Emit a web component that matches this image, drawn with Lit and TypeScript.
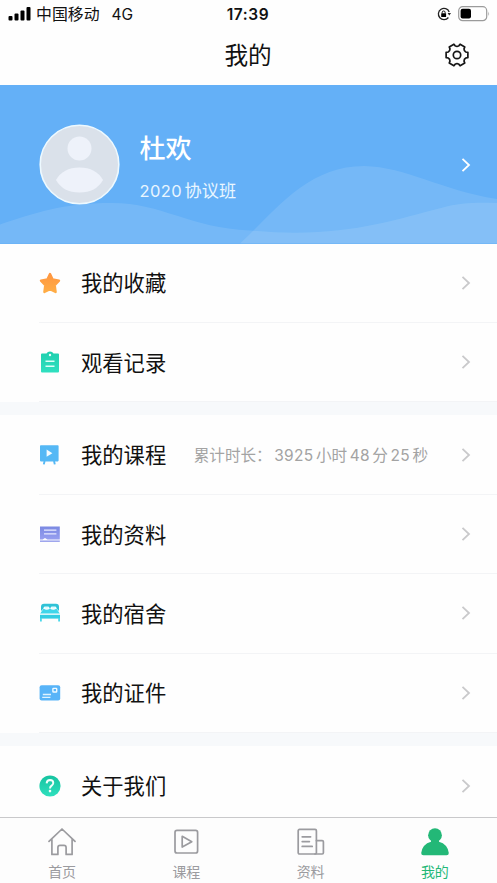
import { LitElement, html, svg, css, nothing } from "lit";
import { customElement } from "lit/decorators.js";
import { classMap } from "lit/directives/class-map.js";

const chevron = html`<svg class="chev" width="12" height="18" viewBox="0 0 12 18">
  <path d="M2.5 2.8 L9 9 L2.5 15.2" fill="none" stroke="currentColor" stroke-width="1.8" />
</svg>`;

// Outline of a six-toothed gear centred at (12, 12), one tooth pointing right.
const polar = (r: number, deg: number) => {
  const a = (deg * Math.PI) / 180;
  return `${(12 + r * Math.cos(a)).toFixed(2)} ${(12 + r * Math.sin(a)).toFixed(2)}`;
};
const gearPath =
  [0, 60, 120, 180, 240, 300]
    .map((t, i) => `${i ? "L" : "M"}${polar(11.2, t - 14)} L${polar(11.2, t + 14)} L${polar(9.3, t + 19)} Q${polar(8.1, t + 30)} ${polar(9.3, t + 41)}`)
    .join(" ") + "Z";

const icons = {
  star: svg`
    <defs><linearGradient id="gs" x1="0" y1="0" x2="0" y2="1"><stop offset="0" stop-color="#ff9640"/><stop offset="1" stop-color="#ffad45"/></linearGradient></defs>
    <path d="M11 2 L13.6 7.4 L20 8.6 L15.7 13.2 L16.6 20 L11 17.2 L5.4 20 L6.3 13.2 L2 8.6 L8.4 7.4 Z" fill="url(#gs)" stroke="url(#gs)" stroke-width="2.4" stroke-linejoin="round"/>`,
  clipboard: svg`
    <defs><linearGradient id="gc" x1="0" y1="0" x2="0" y2="1"><stop offset="0" stop-color="#1fcfae"/><stop offset="1" stop-color="#30e0c0"/></linearGradient></defs>
    <path d="M3 2.6 H7.5 Q8.5 .8 11 .6 Q13.5 .8 14.5 2.6 H19 Q20 2.6 20 3.6 V20.4 Q20 21.4 19 21.4 H3 Q2 21.4 2 20.4 V3.6 Q2 2.6 3 2.6Z" fill="url(#gc)"/>
    <circle cx="11" cy="4" r="1.2" fill="#e8fffa"/>
    <path d="M6.5 10.2 H15.500 M6.5 15.200 H15.500" stroke="#dffff8" stroke-width="1.500"/>`,
  board: svg`
    <rect x="1" y="1.200" width="18.600" height="16.200" rx=".8" fill="#55b8f5"/>
    <path d="M5.600 17 L4.800 20.400 M15 17 L15.800 20.400" stroke="#55b8f5" stroke-width="1.900"/>
    <path d="M7.600 5.600 L13.400 9.200 L7.600 12.800Z" fill="#f4fbff"/>`,
  notes: svg`
    <defs><linearGradient id="gn" x1="0" y1="0" x2="0" y2="1"><stop offset="0" stop-color="#7b89e2"/><stop offset="1" stop-color="#979ff0"/></linearGradient></defs>
    <path d="M1 3.400 H20.800 V16.400 H8.400 L6 15 L3.600 16.400 H1Z" fill="url(#gn)"/>
    <path d="M5 7.200 H17.400 M5 10.800 H17.400" stroke="#e8eaff" stroke-width="1.200"/>
    <path d="M1 18.200 H20.800" stroke="#9aa2ec" stroke-width="1.500"/>`,
  bed: svg`
    <path d="M2 9 V4.800 Q2 1.800 5 1.800 H17 Q20 1.800 20 4.800 V9 L18.200 7.200 L17 5 H12.200 L11 6.200 L9.800 5 H5 L3.800 7.200Z" fill="#2fc2d6"/>
    <path d="M4.600 6.600 Q8 9.200 11 6.200 Q14 9.200 17.400 6.600 L20.800 11.600 H1.200Z" fill="#3fd6ea"/>
    <path d="M5.200 4.600 H9.800 L9 6.400 H6Z M12.200 4.600 H16.800 L16 6.400 H13Z" fill="#dcfbff"/>
    <rect x="1" y="12.800" width="20" height="3.800" fill="#34cde2"/>
    <path d="M1.900 16 V19.600 M20.100 16 V19.600" stroke="#48d8ea" stroke-width="1.800"/>`,
  card: svg`
    <rect x=".6" y="3.200" width="20.600" height="15.400" rx="2" fill="#58b4f8"/>
    <rect x="13.900" y="6.400" width="3.800" height="3.600" rx=".6" fill="none" stroke="#effaff" stroke-width="1.400"/>
    <path d="M3.800 12.500 H12 M3.200 15.400 H11.400" stroke="#dff3ff" stroke-width="1.300"/>`,
  help: svg`
    <defs><linearGradient id="gh" x1="0" y1="0" x2="0" y2="1"><stop offset="0" stop-color="#16c3a0"/><stop offset="1" stop-color="#2fe0be"/></linearGradient></defs>
    <circle cx="11" cy="11" r="10.600" fill="url(#gh)"/>
    <path d="M7.600 8.400 Q7.800 5 11 5 Q14.300 5.100 14.300 8 Q14.200 9.500 12.600 10.600 Q11 11.700 11 13.500" fill="none" stroke="#f2fffb" stroke-width="1.900"/>
    <circle cx="11" cy="16.100" r="1.300" fill="#f2fffb"/>`,
  home: svg`<path d="M1 14.400 L14 2 L27 14.400 M3.900 12.200 V27.400 H9.900 V20.600 Q9.900 18.400 12 18.400 H16 Q18.100 18.400 18.100 20.600 V27.400 H24.100 V12.200"/>`,
  video: svg`<rect x="3" y="3.400" width="22.600" height="22.600" rx="2"/><path d="M10.200 9.300 L19.800 14.700 L10.200 20.100Z"/>`,
  docs: svg`<rect x="1.200" y="2.400" width="18.200" height="24.600" rx="1.300"/><path d="M19.400 13.600 H25.200 Q26.400 13.600 26.400 14.800 V25.800 Q26.400 27 25.200 27 H18 M5.200 9.800 H13.600 M5.200 14.600 H12.400 M5.200 19.400 H15.200"/>`,
  me: svg`<g fill="currentColor" stroke="none"><circle cx="14" cy="8.200" r="6.900"/><path d="M10 13 H18 V14.800 Q26.600 17.200 27.800 26 Q27.800 28.200 25.600 28.200 H2.400 Q.2 28.200 .2 26 Q1.400 17.200 10 14.800Z"/></g>`,
};

type IconName = keyof typeof icons;
interface Row { icon: IconName; label: string; hint?: boolean }

const groups: Row[][] = [
  [{ icon: "star", label: "我的收藏" }, { icon: "clipboard", label: "观看记录" }],
  [
    { icon: "board", label: "我的课程", hint: true },
    { icon: "notes", label: "我的资料" },
    { icon: "bed", label: "我的宿舍" },
    { icon: "card", label: "我的证件" },
  ],
  [{ icon: "help", label: "关于我们" }],
];

const tabs: { icon: IconName; label: string; active?: boolean }[] = [
  { icon: "home", label: "首页" },
  { icon: "video", label: "课程" },
  { icon: "docs", label: "资料" },
  { icon: "me", label: "我的", active: true },
];

@customElement("app-root")
export class AppRoot extends LitElement {
  static styles = css`
    :host {
      display: flex; flex-direction: column; height: 883px; overflow: hidden;
      background: #fefefe; color: #111;
      font-family: Inter, "Noto Sans CJK SC", sans-serif;
    }
    * { box-sizing: border-box; }
    svg { display: block; flex: none; }
    .status { display: grid; grid-template-columns: 1fr auto 1fr; align-items: center; height: 28px; padding: 0 7px 0 8px; flex: none; }
    .carrier { display: flex; align-items: center; font-size: 15.9px; line-height: 20px; }
    .carrier .name { margin-left: 5px; padding-top: 2px; }
    .carrier .net { margin-left: 12px; font-size: 15.5px; padding-top: 1px; }
    .time { font-size: 15.5px; font-weight: 600; letter-spacing: .6px; line-height: 20px; padding-top: 1px; margin-left: -2px; }
    .power { display: flex; justify-content: flex-end; align-items: center; gap: 7px; }
    .nav { display: grid; grid-template-columns: 1fr auto 1fr; align-items: center; height: 57px; padding: 0 28px; flex: none; }
    .title { grid-column: 2; font-size: 23.6px; line-height: 30px; margin-top: -1px; margin-left: -1px; }
    .gear { justify-self: end; margin-top: -3px; }
    .hero { position: relative; height: 158.5px; flex: none; background: #64b0f7; color: #fff; display: flex; align-items: center; padding: 0 25px 0 39px; }
    .waves { position: absolute; inset: 0; width: 100%; height: 100%; }
    .avatar { position: relative; }
    .who { position: relative; flex: 1; margin-left: 19.500px; }
    .uname { font-size: 26px; font-weight: 500; line-height: 36px; margin-top: 5px; }
    .klass { display: flex; gap: 2.5px; font-size: 17.200px; line-height: 24px; margin-top: 11.500px; color: #e9f6ff; }
    .klass .num { font-size: 16.500px; letter-spacing: .4px; }
    .hero .chev { position: relative; color: #fff; margin-top: 2px; }
    .list { flex: 1; min-height: 0; overflow: hidden; display: flex; flex-direction: column; gap: 13.2px; background: #f7f9fb; }
    .group { background: #fefefe; flex: none; }
    .group:last-child { flex: 1; }
    .row { display: flex; align-items: center; height: 79.4px; margin-left: 39px; padding-right: 25px; border-bottom: 1px solid #f3f4f6; }
    .group:last-child .row { border-bottom: 0; }
    .label { font-size: 21.3px; line-height: 30px; margin-left: 20px; padding-top: 1px; white-space: nowrap; }
    .hint { display: flex; margin-left: 27.5px; padding-top: 2px; font-size: 15.6px; line-height: 24px; color: #a3a3a3; white-space: nowrap; }
    .hint .num { margin: 0 2.5px 0 2.5px; letter-spacing: .3px; font-size: 15.5px; }
    .row .chev { margin-left: auto; color: #c9c9cb; }
    .tabs { display: grid; grid-template-columns: repeat(4, 1fr); height: 66px; flex: none; border-top: 1px solid #c9c9cb; background: #fdfdfd; }
    .tab { display: flex; flex-direction: column; align-items: center; padding-top: 9px; color: #9b9b9f; font-size: 14px; line-height: 20px; gap: 5px; }
    .tab svg { fill: none; stroke: currentColor; stroke-width: 1.7; stroke-linejoin: round; stroke-linecap: round; }
    .tab.on { color: #23b877; }
  `;

  render() {
    return html`
      <div class="status">
        <div class="carrier">
          <svg width="23" height="14" viewBox="0 0 23 14"><rect x=".5" y="9" width="4" height="4.4" rx="1"/><rect x="6.5" y="6.6" width="4" height="6.8" rx="1"/><rect x="12.5" y="3.4" width="4" height="10" rx="1"/><rect x="18.5" y="0" width="4" height="13.4" rx="1"/></svg>
          <span class="name">中国移动</span><span class="net">4G</span>
        </div>
        <div class="time">17:39</div>
        <div class="power">
          <svg width="14" height="14" viewBox="0 0 14 14"><path d="M12.2 5 A5.6 5.6 0 1 0 11.4 10.5" fill="none" stroke="#222" stroke-width="1.3"/><path d="M10.6 6 H14 L12.3 8.6Z" fill="#222"/><rect x="4.2" y="6.2" width="4.9" height="3.8" rx=".5"/><path d="M5.2 6.4 V5.3 Q5.2 4 6.65 4 Q8.1 4 8.1 5.3 V6.4" fill="none" stroke="#111"/></svg>
          <svg width="32" height="16" viewBox="0 0 32 16"><rect x=".7" y=".7" width="28" height="14" rx="4" fill="none" stroke="#9b9b9b" stroke-width="1.2"/><rect x="2.6" y="2.8" width="10.4" height="9.8" rx="2"/><path d="M30.4 5.4 Q31.8 7.7 30.4 10Z" fill="#9b9b9b"/></svg>
        </div>
      </div>
      <div class="nav">
        <div class="title">我的</div>
        <svg class="gear" width="24" height="24" viewBox="0 0 24 24" fill="none" stroke="#161616" stroke-width="1.7" stroke-linejoin="round">
          <path d=${gearPath}/><circle cx="12" cy="12" r="3.7"/>
        </svg>
      </div>
      <div class="hero">
        <svg class="waves" viewBox="0 0 497 158.5" preserveAspectRatio="none">
          <path d="M0 139.5 C35 128 62 118 112 118 C162 118 190 143 250 145.5 C340 154 390 136 441 123 C462 117 478 117.5 497 118 V158.5 H0Z" fill="#fff" fill-opacity=".11"/>
          <path d="M240 158.5 C272 130 305 81 364 81 C407 82 440 105 497 114 V158.5Z" fill="#fff" fill-opacity=".11"/>
        </svg>
        <svg class="avatar" width="81" height="81" viewBox="0 0 81 81">
          <circle cx="40.5" cy="40.5" r="39.3" fill="#dae1ea" stroke="#edf9ff" stroke-width="1.6"/>
          <circle cx="40.5" cy="24.5" r="12" fill="#eef2fa"/>
          <path d="M17 56 Q24 43.5 40.5 43.5 Q57 43.5 64 56 Q57 68.5 40.5 68.5 Q24 68.5 17 56Z" fill="#eef2fa"/>
        </svg>
        <div class="who">
          <div class="uname">杜欢</div>
          <div class="klass"><span class="num">2020</span><span>协议班</span></div>
        </div>
        ${chevron}
      </div>
      <div class="list">
        ${groups.map((g) => html`<div class="group">${g.map((r) => html`
          <div class="row">
            <svg width="22" height="22" viewBox="0 0 22 22">${icons[r.icon]}</svg>
            <span class="label">${r.label}</span>
            ${r.hint ? html`<span class="hint"><span>累计时长：</span><span class="num">3925</span><span>小时</span><span class="num">48</span><span>分</span><span class="num">25</span><span>秒</span></span>` : nothing}
            ${chevron}
          </div>`)}</div>`)}
      </div>
      <div class="tabs">
        ${tabs.map((t) => html`<div class=${classMap({ tab: true, on: !!t.active })}>
          <svg width="28" height="30" viewBox="0 0 28 30">${icons[t.icon]}</svg><span>${t.label}</span>
        </div>`)}
      </div>`;
  }
}
